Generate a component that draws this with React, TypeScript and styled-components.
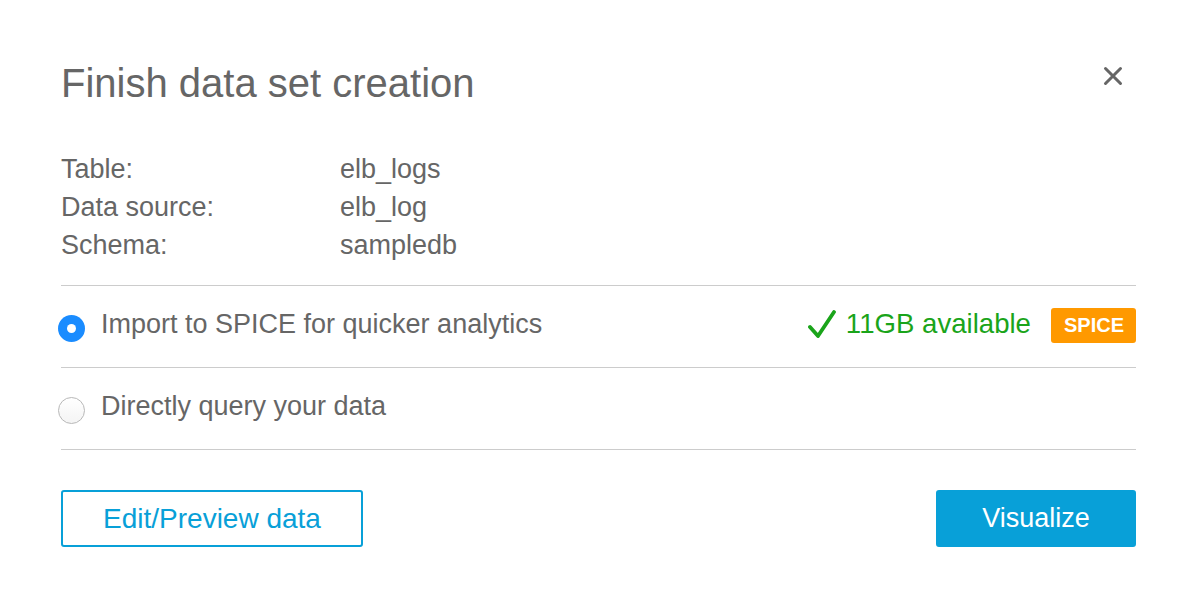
import React from "react";
import styled, { createGlobalStyle } from "styled-components";

const GlobalStyle = createGlobalStyle`
  html, body {
    margin: 0;
    padding: 0;
    background: #ffffff;
  }
  body {
    font-family: "Liberation Sans", Arial, Helvetica, sans-serif;
    color: #666666;
  }
`;

const Dialog = styled.div`
  width: 1186px;
  height: 596px;
  box-sizing: border-box;
  padding: 59px 50px 0 61px;
  display: flex;
  flex-direction: column;
`;

const Header = styled.div`
  display: flex;
  justify-content: space-between;
  align-items: flex-start;
`;

const Title = styled.h1`
  margin: 0;
  font-size: 40px;
  line-height: 48px;
  font-weight: 400;
  color: #666666;
`;

const CloseButton = styled.button`
  border: 0;
  background: none;
  padding: 0;
  margin: 7px 13px 0 0;
  width: 20px;
  height: 20px;
  cursor: pointer;
  display: flex;
`;

const InfoGrid = styled.dl`
  margin: 43px 0 0;
  display: grid;
  grid-template-columns: 279px 1fr;
  font-size: 27px;
  line-height: 38px;
`;

const InfoLabel = styled.dt`
  margin: 0;
`;

const InfoValue = styled.dd`
  margin: 0;
`;

const OptionList = styled.div`
  margin-top: 21px;
  border-top: 1px solid #cccccc;
`;

const OptionRow = styled.label`
  height: 81px;
  display: flex;
  align-items: center;
  border-bottom: 1px solid #cccccc;
  cursor: pointer;
`;

const Radio = styled.span<{ $checked?: boolean }>`
  box-sizing: border-box;
  width: 27px;
  height: 27px;
  margin: 3px 16px 0 -3px;
  border-radius: 50%;
  flex-shrink: 0;
  display: flex;
  align-items: center;
  justify-content: center;
  background: ${({ $checked }) =>
    $checked ? "#1a8cff" : "linear-gradient(#ffffff, #f4f4f4)"};
  border: ${({ $checked }) => ($checked ? "none" : "1px solid #b8b8b8")};

  &::after {
    content: "";
    display: ${({ $checked }) => ($checked ? "block" : "none")};
    width: 9px;
    height: 9px;
    border-radius: 50%;
    background: #ffffff;
  }
`;

const OptionText = styled.span`
  font-size: 27px;
  line-height: 38px;
  margin-bottom: 5px;
  flex: 1;
`;

const Availability = styled.span`
  display: flex;
  align-items: center;
  color: #1aa41a;
  font-size: 27.6px;
  line-height: 38px;
  margin-bottom: 5px;
  gap: 10px;
`;

const Badge = styled.span`
  margin-left: 20px;
  height: 35px;
  padding: 0 12px 0 13px;
  border-radius: 3px;
  background: #ff9900;
  color: #ffffff;
  font-weight: 700;
  font-size: 20px;
  line-height: 35px;
  margin-top: -3px;
`;

const Footer = styled.div`
  margin-top: 40px;
  display: flex;
  justify-content: space-between;
`;

const Button = styled.button<{ $primary?: boolean }>`
  box-sizing: border-box;
  height: 57px;
  width: ${({ $primary }) => ($primary ? "200px" : "302px")};
  border-radius: 3px;
  font-family: inherit;
  font-size: ${({ $primary }) => ($primary ? "27px" : "28px")};
  cursor: pointer;
  border: 2px solid #08a0d8;
  background: ${({ $primary }) => ($primary ? "#08a0d8" : "#ffffff")};
  color: ${({ $primary }) => ($primary ? "#ffffff" : "#08a0d8")};
`;

export default function App() {
  return (
    <>
      <GlobalStyle />
      <Dialog>
        <Header>
          <Title>Finish data set creation</Title>
          <CloseButton aria-label="Close">
            <svg width="20" height="20" viewBox="0 0 20 20">
              <path
                d="M2.5 2.5 L17.5 17.5 M17.5 2.5 L2.5 17.5"
                stroke="#666666"
                strokeWidth="3"
                strokeLinecap="round"
              />
            </svg>
          </CloseButton>
        </Header>

        <InfoGrid>
          <InfoLabel>Table:</InfoLabel>
          <InfoValue>elb_logs</InfoValue>
          <InfoLabel>Data source:</InfoLabel>
          <InfoValue>elb_log</InfoValue>
          <InfoLabel>Schema:</InfoLabel>
          <InfoValue>sampledb</InfoValue>
        </InfoGrid>

        <OptionList>
          <OptionRow>
            <Radio $checked />
            <OptionText>Import to SPICE for quicker analytics</OptionText>
            <Availability>
              <svg width="28" height="28" viewBox="0 0 28 28">
                <path
                  d="M2 17 L10 26 L26 2"
                  fill="none"
                  stroke="#1aa41a"
                  strokeWidth="3.8"
                  strokeLinecap="round"
                  strokeLinejoin="round"
                />
              </svg>
              11GB available
            </Availability>
            <Badge>SPICE</Badge>
          </OptionRow>
          <OptionRow>
            <Radio />
            <OptionText>Directly query your data</OptionText>
          </OptionRow>
        </OptionList>

        <Footer>
          <Button>Edit/Preview data</Button>
          <Button $primary>Visualize</Button>
        </Footer>
      </Dialog>
    </>
  );
}
